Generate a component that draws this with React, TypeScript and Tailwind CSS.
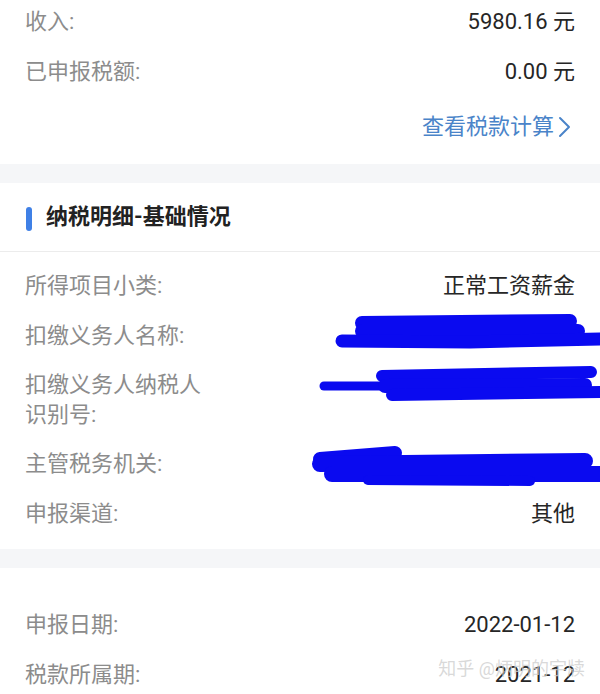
import React from "react";

const font = { fontFamily: "Roboto, 'Noto Sans CJK SC', sans-serif" };

function Row({ label, value, className = "" }: { label: React.ReactNode; value?: React.ReactNode; className?: string }) {
  return (
    <div className={`flex items-center justify-between px-[25px] h-[50px] ${className}`}>
      <span className="text-[22px] text-[#8c8c8c] leading-[30px]">{label}</span>
      {value !== undefined && <span className="text-[22px] text-[#262626] leading-[30px]">{value}</span>}
    </div>
  );
}

function Scribble({ h, children }: { h: number; children: React.ReactNode }) {
  return (
    <svg className="absolute left-0 top-0 pointer-events-none" width={600} height={h} viewBox={`0 0 600 ${h}`}>
      <g stroke="#0a0af0" fill="none" strokeLinecap="round" strokeLinejoin="round">{children}</g>
    </svg>
  );
}

export default function App() {
  return (
    <div className="w-[600px] h-[694px] overflow-hidden bg-white" style={font}>
      <div className="-mt-[3px]">
        <Row label="收入:" value="5980.16 元" />
        <Row label="已申报税额:" value="0.00 元" />
        <div className="flex items-center justify-end h-[60px] pr-[27px]">
          <span className="text-[22px] text-[#4a84c9] leading-[30px]">查看税款计算</span>
          <svg width="16" height="24" viewBox="0 0 16 24" className="ml-[3px]">
            <path d="M3 3 L12 12 L3 21" stroke="#4a84c9" strokeWidth="2" fill="none" strokeLinecap="round" strokeLinejoin="round" />
          </svg>
        </div>
        <div className="h-[7px]" />
      </div>
      <div className="h-[19px] bg-[#f5f6f8]" />
      <div className="flex items-center h-[69px] border-b border-[#ececec] pl-[26px]">
        <div className="w-[6px] h-[24px] rounded-full bg-[#3f80e6] mt-[4px]" />
        <span className="ml-[14px] text-[22px] font-bold text-[#222] leading-[30px]">纳税明细-基础情况</span>
      </div>
      <div className="pt-[9px] pb-[10px]">
        <Row label="所得项目小类:" value="正常工资薪金" />
        <div className="relative">
          <Row label="扣缴义务人名称:" />
          <Scribble h={50}>
            <path d="M362 12 L570 10" strokeWidth="14" />
            <path d="M362 20 L578 20" strokeWidth="14" />
            <path d="M342 30 L470 31 L600 28" strokeWidth="13" />
          </Scribble>
        </div>
        <div className="relative flex items-center px-[25px] py-[9px]">
          <span className="text-[22px] text-[#8c8c8c] leading-[30px]">
            扣缴义务人纳税人
            <br />
            识别号:
          </span>
          <Scribble h={78}>
            <path d="M324 25 L470 25" strokeWidth="9" />
            <path d="M382 15 L591 11" strokeWidth="12" />
            <path d="M385 25 L585 24" strokeWidth="14" />
            <path d="M392 34 L600 31" strokeWidth="12" />
          </Scribble>
        </div>
        <div className="relative">
          <Row label="主管税务机关:" />
          <Scribble h={50}>
            <path d="M320 20 L395 14" strokeWidth="14" />
            <path d="M320 25 L585 22" strokeWidth="16" />
            <path d="M332 35 L600 35" strokeWidth="16" />
            <path d="M368 41 L530 42" strokeWidth="10" />
          </Scribble>
        </div>
        <Row label="申报渠道:" value="其他" />
      </div>
      <div className="h-[19px] bg-[#f5f6f8]" />
      <div className="pt-[32px]">
        <Row label="申报日期:" value="2022-01-12" />
        <div className="relative">
          <Row label="税款所属期:" value="2021-12" />
          <span className="absolute right-[15px] top-[4px] text-[18px] text-[#cfcfcf]/80 leading-[30px]">知乎 @炳明的宇牍</span>
        </div>
      </div>
    </div>
  );
}
